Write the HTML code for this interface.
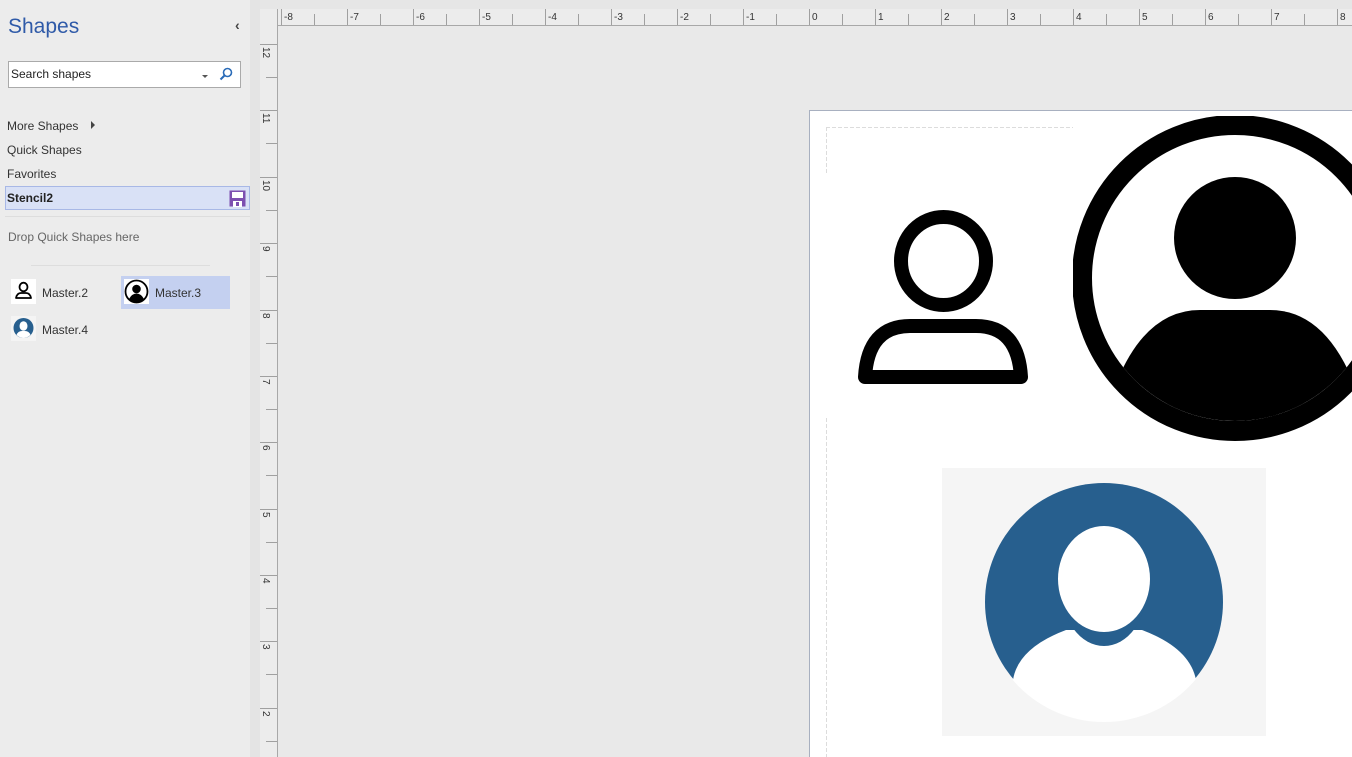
<!DOCTYPE html>
<html><head><meta charset="utf-8"><style>
*{margin:0;padding:0;box-sizing:border-box}
body{width:1352px;height:757px;overflow:hidden;background:#e9e9e9;font-family:"Liberation Sans",sans-serif;position:relative}
#panel{position:absolute;left:0;top:0;width:250px;height:757px;background:#ececec}
#strip{position:absolute;left:250px;top:0;width:10px;height:757px;background:#e4e4e4}
.t{position:absolute;font-size:12px;color:#333}
</style></head><body>
<div id="panel">
<div class="t" style="left:8px;top:15px;font-size:21px;color:#2f5aa8">Shapes</div>
<div class="t" style="left:235px;top:17px;font-size:14px;font-weight:bold;color:#444">&#8249;</div>
<div style="position:absolute;left:8px;top:61px;width:233px;height:27px;background:#fff;border:1px solid #aaa"></div>
<div class="t" style="left:11px;top:67px;color:#222">Search shapes</div>
<div style="position:absolute;left:202px;top:75px;border-left:3px solid transparent;border-right:3px solid transparent;border-top:3px solid #555"></div>
<svg style="position:absolute;left:219px;top:67px" width="14" height="14"><circle cx="8.5" cy="5.5" r="4" fill="none" stroke="#2b6cb8" stroke-width="1.6"/><line x1="5.5" y1="8.5" x2="1.5" y2="12.5" stroke="#2b6cb8" stroke-width="2"/></svg>
<div class="t" style="left:7px;top:119px">More Shapes</div>
<div style="position:absolute;left:91px;top:121px;border-top:4px solid transparent;border-bottom:4px solid transparent;border-left:4px solid #444"></div>
<div class="t" style="left:7px;top:143px">Quick Shapes</div>
<div class="t" style="left:7px;top:167px">Favorites</div>
<div style="position:absolute;left:5px;top:186px;width:245px;height:24px;background:#d9e1f6;border:1px solid #a8b8e6"></div>
<div class="t" style="left:7px;top:191px;font-weight:bold;color:#222">Stencil2</div>
<svg style="position:absolute;left:229px;top:190px" width="17" height="17"><rect x="0.5" y="0.5" width="16" height="16" fill="#7d4fb0"/><rect x="3" y="2" width="11" height="6" fill="#fff"/><rect x="4" y="11" width="9" height="6" fill="#fff"/><rect x="7" y="12" width="3" height="4" fill="#7d4fb0"/></svg>
<div style="position:absolute;left:5px;top:216px;width:245px;height:1px;background:#ddd"></div>
<div class="t" style="left:8px;top:230px;color:#666">Drop Quick Shapes here</div>
<div style="position:absolute;left:31px;top:265px;width:179px;height:1px;background:#ddd"></div>
<div style="position:absolute;left:121px;top:276px;width:109px;height:33px;background:#c4d0f0"></div>
<svg style="position:absolute;left:11px;top:279px" width="25" height="25"><rect width="25" height="25" fill="#fff"/><ellipse cx="12.5" cy="8" rx="4" ry="4.3" fill="none" stroke="#000" stroke-width="1.8"/><path d="M5,19 Q6,14 10,14 L15,14 Q19,14 20,19 Z" fill="none" stroke="#000" stroke-width="1.8" stroke-linejoin="round"/></svg>
<div class="t" style="left:42px;top:286px">Master.2</div>
<svg style="position:absolute;left:124px;top:279px" width="25" height="25"><rect width="25" height="25" fill="#fff"/><circle cx="12.5" cy="12.5" r="11" fill="none" stroke="#000" stroke-width="1.8"/><circle cx="12.5" cy="10" r="4.3" fill="#000"/><path d="M5,20 Q8,14.5 12.5,14.5 Q17,14.5 20,20 Q16.5,24 12.5,24 Q8.5,24 5,20Z" fill="#000"/></svg>
<div class="t" style="left:155px;top:286px">Master.3</div>
<svg style="position:absolute;left:11px;top:316px" width="25" height="25"><rect width="25" height="25" fill="#f4f4f4"/><circle cx="12.5" cy="12" r="10" fill="#275f8e"/><ellipse cx="12.5" cy="10" rx="4" ry="4.8" fill="#fff"/><path d="M5.5,19 Q7,15 11,15 L14,15 Q18,15 19.5,19 Q16,22 12.5,22 Q9,22 5.5,19Z" fill="#fff"/></svg>
<div class="t" style="left:42px;top:323px">Master.4</div>
</div>
<div id="strip"></div>
<svg style="position:absolute;left:0;top:0" width="1352" height="757">
<defs>
<clipPath id="cbig"><rect x="1073" y="116" width="400" height="325"/></clipPath>
<clipPath id="cin"><circle cx="1235" cy="278" r="143"/></clipPath>
<clipPath id="cblue"><circle cx="1104" cy="602" r="120"/></clipPath>
</defs>
<rect x="260" y="0" width="1092" height="9" fill="#e6e6e6"/>
<rect x="260" y="9" width="1092" height="16" fill="#ececec"/>
<line x1="260" y1="25.5" x2="1352" y2="25.5" stroke="#a8a8a8"/>
<rect x="260" y="25" width="17" height="732" fill="#ececec"/>
<line x1="277.5" y1="9" x2="277.5" y2="757" stroke="#a8a8a8"/>
<g stroke="#a0a0a0" stroke-width="1">
<line x1="281.5" y1="9" x2="281.5" y2="25"/><line x1="314.5" y1="14" x2="314.5" y2="25"/>
<line x1="347.5" y1="9" x2="347.5" y2="25"/><line x1="380.5" y1="14" x2="380.5" y2="25"/>
<line x1="413.5" y1="9" x2="413.5" y2="25"/><line x1="446.5" y1="14" x2="446.5" y2="25"/>
<line x1="479.5" y1="9" x2="479.5" y2="25"/><line x1="512.5" y1="14" x2="512.5" y2="25"/>
<line x1="545.5" y1="9" x2="545.5" y2="25"/><line x1="578.5" y1="14" x2="578.5" y2="25"/>
<line x1="611.5" y1="9" x2="611.5" y2="25"/><line x1="644.5" y1="14" x2="644.5" y2="25"/>
<line x1="677.5" y1="9" x2="677.5" y2="25"/><line x1="710.5" y1="14" x2="710.5" y2="25"/>
<line x1="743.5" y1="9" x2="743.5" y2="25"/><line x1="776.5" y1="14" x2="776.5" y2="25"/>
<line x1="809.5" y1="9" x2="809.5" y2="25"/><line x1="842.5" y1="14" x2="842.5" y2="25"/>
<line x1="875.5" y1="9" x2="875.5" y2="25"/><line x1="908.5" y1="14" x2="908.5" y2="25"/>
<line x1="941.5" y1="9" x2="941.5" y2="25"/><line x1="974.5" y1="14" x2="974.5" y2="25"/>
<line x1="1007.5" y1="9" x2="1007.5" y2="25"/><line x1="1040.5" y1="14" x2="1040.5" y2="25"/>
<line x1="1073.5" y1="9" x2="1073.5" y2="25"/><line x1="1106.5" y1="14" x2="1106.5" y2="25"/>
<line x1="1139.5" y1="9" x2="1139.5" y2="25"/><line x1="1172.5" y1="14" x2="1172.5" y2="25"/>
<line x1="1205.5" y1="9" x2="1205.5" y2="25"/><line x1="1238.5" y1="14" x2="1238.5" y2="25"/>
<line x1="1271.5" y1="9" x2="1271.5" y2="25"/><line x1="1304.5" y1="14" x2="1304.5" y2="25"/>
<line x1="1337.5" y1="9" x2="1337.5" y2="25"/>
<line x1="260" y1="44.5" x2="277" y2="44.5"/><line x1="266" y1="77.5" x2="277" y2="77.5"/>
<line x1="260" y1="110.5" x2="277" y2="110.5"/><line x1="266" y1="143.5" x2="277" y2="143.5"/>
<line x1="260" y1="177.5" x2="277" y2="177.5"/><line x1="266" y1="210.5" x2="277" y2="210.5"/>
<line x1="260" y1="243.5" x2="277" y2="243.5"/><line x1="266" y1="276.5" x2="277" y2="276.5"/>
<line x1="260" y1="310.5" x2="277" y2="310.5"/><line x1="266" y1="343.5" x2="277" y2="343.5"/>
<line x1="260" y1="376.5" x2="277" y2="376.5"/><line x1="266" y1="409.5" x2="277" y2="409.5"/>
<line x1="260" y1="442.5" x2="277" y2="442.5"/><line x1="266" y1="475.5" x2="277" y2="475.5"/>
<line x1="260" y1="509.5" x2="277" y2="509.5"/><line x1="266" y1="542.5" x2="277" y2="542.5"/>
<line x1="260" y1="575.5" x2="277" y2="575.5"/><line x1="266" y1="608.5" x2="277" y2="608.5"/>
<line x1="260" y1="641.5" x2="277" y2="641.5"/><line x1="266" y1="674.5" x2="277" y2="674.5"/>
<line x1="260" y1="708.5" x2="277" y2="708.5"/><line x1="266" y1="741.5" x2="277" y2="741.5"/>
</g>
<g font-family="Liberation Sans,sans-serif" font-size="10" fill="#333">
<text x="284" y="20">-8</text><text x="350" y="20">-7</text><text x="416" y="20">-6</text><text x="482" y="20">-5</text><text x="548" y="20">-4</text><text x="614" y="20">-3</text><text x="680" y="20">-2</text><text x="746" y="20">-1</text><text x="812" y="20">0</text><text x="878" y="20">1</text><text x="944" y="20">2</text><text x="1010" y="20">3</text><text x="1076" y="20">4</text><text x="1142" y="20">5</text><text x="1208" y="20">6</text><text x="1274" y="20">7</text><text x="1340" y="20">8</text>
<text transform="translate(263,47) rotate(90)">12</text>
<text transform="translate(263,113) rotate(90)">11</text>
<text transform="translate(263,180) rotate(90)">10</text>
<text transform="translate(263,246) rotate(90)">9</text>
<text transform="translate(263,313) rotate(90)">8</text>
<text transform="translate(263,379) rotate(90)">7</text>
<text transform="translate(263,445) rotate(90)">6</text>
<text transform="translate(263,512) rotate(90)">5</text>
<text transform="translate(263,578) rotate(90)">4</text>
<text transform="translate(263,644) rotate(90)">3</text>
<text transform="translate(263,711) rotate(90)">2</text>
</g>
<rect x="809.5" y="110.5" width="560" height="660" fill="#fff" stroke="#a8b0c0"/>
<g stroke="#dcdcdc" stroke-dasharray="4,2">
<line x1="826" y1="127.5" x2="1073" y2="127.5"/>
<line x1="826.5" y1="127" x2="826.5" y2="175"/>
<line x1="826.5" y1="418" x2="826.5" y2="757"/>
</g>
<ellipse cx="943.5" cy="261" rx="42.5" ry="44" fill="none" stroke="#000" stroke-width="14"/>
<path d="M865,377 Q868,326 910,326 L976,326 Q1018,326 1021,377 Z" fill="none" stroke="#000" stroke-width="14" stroke-linejoin="round"/>
<g clip-path="url(#cbig)">
<circle cx="1235" cy="278" r="153" fill="none" stroke="#000" stroke-width="20"/>
<circle cx="1235" cy="238" r="61" fill="#000"/>
<g clip-path="url(#cin)"><path d="M1110,400 Q1140,310 1200,310 L1270,310 Q1330,310 1360,400 L1360,460 L1110,460Z" fill="#000"/></g>
</g>
<rect x="942" y="468" width="324" height="268" fill="#f5f5f5"/>
<circle cx="1104" cy="602" r="119" fill="#275f8e"/>
<g clip-path="url(#cblue)"><path d="M1013,680 Q1018,648 1066,630 L1142,630 Q1190,648 1196,680 L1196,740 L1013,740Z" fill="#fff"/></g>
<ellipse cx="1104" cy="588" rx="43" ry="58" fill="#275f8e"/>
<ellipse cx="1104" cy="579" rx="46" ry="53" fill="#fff"/>
</svg>
</body></html>
